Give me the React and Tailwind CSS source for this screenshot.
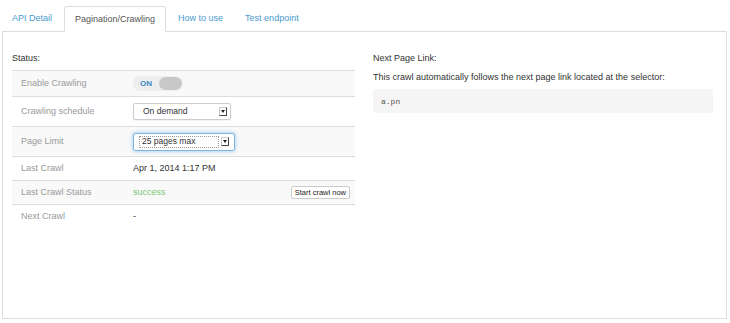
import React from 'react'

const font = { fontFamily: '"Liberation Sans", Arial, Helvetica, sans-serif' }

function Tab({ label, active }) {
  if (active) {
    return (
      <div className="relative z-10 -mb-px mr-[2px] h-[26px] px-[10px] flex items-center rounded-t-[3px] border border-[#ddd] border-b-white bg-white text-[#555]">
        {label}
      </div>
    )
  }
  return (
    <div className="mr-[2px] h-[26px] px-[10px] flex items-center text-[#4a9bd0]">
      {label}
    </div>
  )
}

function SelectArrow() {
  return (
    <div className="w-[8px] h-[9px] bg-white border-r border-b border-[#444] border-t border-l border-t-[#ccc] border-l-[#ccc] flex items-center justify-center">
      <div className="w-0 h-0 border-l-[2px] border-r-[2px] border-t-[3px] border-l-transparent border-r-transparent border-t-[#222]" />
    </div>
  )
}

function Row({ label, striped, h, children }) {
  return (
    <div className={`flex items-center border-t border-[#ddd] ${striped ? 'bg-[#f9f9f9]' : 'bg-white'} ${h}`}>
      <div className="w-[121px] pl-[9px] text-[#999]">{label}</div>
      <div className="flex-1 flex items-center pr-[5px] text-[#333]">{children}</div>
    </div>
  )
}

export default function App() {
  return (
    <div className="w-[730px] h-[323px] bg-white text-[9px] leading-[11px]" style={font}>
      <div className="flex items-end pt-[5px] pl-[2px]">
        <Tab label="API Detail" />
        <Tab label="Pagination/Crawling" active />
        <Tab label="How to use" />
        <Tab label="Test endpoint" />
      </div>

      <div className="ml-[2px] w-[725px] h-[288px] border border-[#ddd] flex pl-[9px] pt-[21px]">
        <div className="w-[343px]">
          <div className="text-[#333] mb-[6px]">Status:</div>

          <Row label="Enable Crawling" striped h="h-[26px]">
            <div className="w-[50px] h-[15px] rounded-full bg-[#eee] flex items-center justify-between pl-[7px] pr-[1px]">
              <span className="text-[8px] font-bold text-[#3a87c0]">ON</span>
              <div className="w-[23px] h-[13px] rounded-full bg-[#c8c8c8]" />
            </div>
          </Row>

          <Row label="Crawling schedule" h="h-[30px]">
            <div className="w-[98px] h-[17px] border border-[#ccc] rounded-[2px] bg-white flex items-center justify-between pl-[9px] pr-[3px] shadow-[0_1px_1px_rgba(0,0,0,0.05)]">
              <span className="text-[8.5px]">On demand</span>
              <SelectArrow />
            </div>
          </Row>

          <Row label="Page Limit" striped h="h-[30px]">
            <div className="w-[102px] h-[18px] border border-[#7fb2e0] rounded-[2px] bg-white flex items-center justify-between pl-[5px] pr-[5px] shadow-[0_0_4px_rgba(82,168,236,0.6)]">
              <span className="text-[8.5px] border border-dotted border-[#999] px-[2px] h-[12px] flex items-center w-[80px]">25 pages max</span>
              <SelectArrow />
            </div>
          </Row>

          <Row label="Last Crawl" h="h-[24px]">
            <span>Apr 1, 2014 1:17 PM</span>
          </Row>

          <Row label="Last Crawl Status" striped h="h-[24px]">
            <span className="text-[#7cc576]">success</span>
            <div className="ml-auto h-[13px] px-[3px] border border-[#ccc] rounded-[2px] bg-white flex items-center text-[7.5px] text-[#222]">
              Start crawl now
            </div>
          </Row>

          <Row label="Next Crawl" h="h-[23px]">
            <span>-</span>
          </Row>
        </div>

        <div className="ml-[18px] w-[340px]">
          <div className="text-[#333]">Next Page Link:</div>
          <div className="text-[#333] mt-[8px]">This crawl automatically follows the next page link located at the selector:</div>
          <div className="mt-[6px] h-[24px] bg-[#f5f5f5] rounded-[2px] flex items-center pl-[8px] text-[8px] text-[#555]" style={{ fontFamily: '"Liberation Mono", "DejaVu Sans Mono", monospace' }}>
            a.pn
          </div>
        </div>
      </div>
    </div>
  )
}
